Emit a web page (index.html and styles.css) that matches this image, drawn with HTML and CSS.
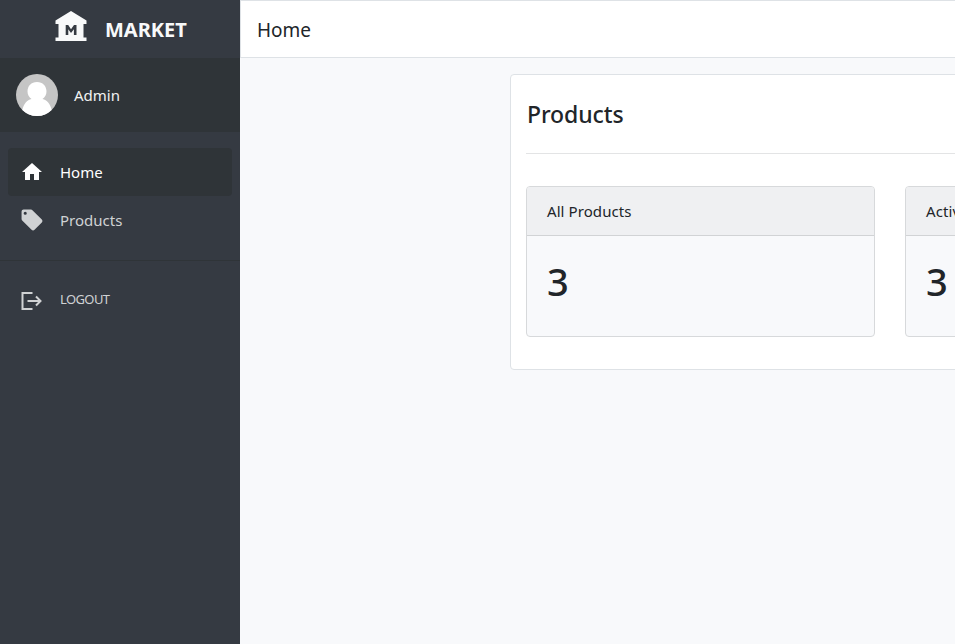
FILE: index.html
```html
<!DOCTYPE html>
<html lang="en">
<head>
<meta charset="utf-8">
<title>Market</title>
<link rel="stylesheet" href="styles.css">
</head>
<body>
<aside class="sidebar">
  <div class="brand">
    <svg class="brand-icon" viewBox="0 0 32 30"><path fill-rule="evenodd" d="M16 0L31.500 9.500V13H28.500V26.500H31.500V30H.5V26.500H3.500V13H.5V9.500zM10.700 14V24H13.300V18.300L16 22 18.900 18.300V24H21.500V14H19L16 18.200 13.200 14z"/></svg>
    <span class="brand-name">MARKET</span>
  </div>
  <div class="user">
    <svg class="avatar" viewBox="0 0 42 42"><circle cx="21" cy="21" r="21" fill="#c5c5c5"/><path d="M21 8c5.800 0 9.500 4.100 9.500 9.300 0 3.400-1.500 6.200-4 7.700 4.500 1.200 7.700 4.800 9.200 11A21 21 0 0 1 6.300 36c1.500-6.200 4.700-9.800 9.200-11-2.500-1.500-4-4.300-4-7.700C11.500 12.100 15.200 8 21 8z" fill="#fff"/></svg>
    <span class="user-name">Admin</span>
  </div>
  <nav class="menu">
    <a class="item active"><svg class="icon" viewBox="0 0 24 24"><path d="M10 20v-6h4v6h5v-8h3L12 3 2 12h3v8z"/></svg><span>Home</span></a>
    <a class="item"><svg class="icon" viewBox="0.500 0.500 23 23"><path fill-rule="evenodd" d="M21.410 11.580l-9-9C12.050 2.220 11.550 2 11 2H4c-1.100 0-2 .9-2 2v7c0 .55.220 1.050.590 1.420l9 9c.36.36.86.58 1.410.58s1.050-.22 1.410-.59l7-7c.37-.36.590-.86.590-1.410s-.23-1.060-.590-1.420zM5.500 7a1.500 1.500 0 1 1 0-3 1.500 1.500 0 0 1 0 3z"/></svg><span>Products</span></a>
  </nav>
  <div class="session">
    <a class="item logout"><svg class="icon" viewBox="0 0 24 24"><path class="stroke" d="M12.500 4H2.500v16h10M7.500 12h13M16 7.500l4.500 4.500-4.500 4.500"/></svg><span class="label-logout">LOGOUT</span></a>
  </div>
</aside>
<div class="page">
  <header class="topbar"><span>Home</span></header>
  <main class="content">
    <section class="panel">
      <h2>Products</h2>
      <div class="cards">
        <article class="card"><div class="card-head">All Products</div><div class="card-value">3</div></article>
        <article class="card"><div class="card-head">Active Products</div><div class="card-value">3</div></article>
      </div>
    </section>
  </main>
</div>
</body>
</html>
```
FILE: styles.css
```css
* { box-sizing: border-box; }
body {
  margin: 0;
  height: 644px;
  display: flex;
  overflow: hidden;
  background: #f8f9fb;
  color: #212529;
  font-family: "Noto Sans", "Open Sans", sans-serif;
  font-size: 15px;
}
.sidebar { width: 240px; flex: none; background: #353a42; color: #fff; }
.brand { height: 58px; display: flex; padding: 11px 0 0 55px; }
.brand-icon { width: 32px; height: 30px; fill: #f8f9fa; }
.brand-name { margin-left: 18px; line-height: 37px; font-size: 20px; font-weight: 700; color: #f8f9fa; }
.user { height: 74px; display: flex; align-items: center; padding-left: 16px; background: #2f3438; }
.avatar { width: 42px; height: 42px; margin-right: 16px; }
.user-name { color: #f1f2f2; }
.menu { height: 129px; padding: 16px 8px 0; border-bottom: 1px solid #2f3438; }
.item { height: 48px; display: flex; align-items: center; padding-left: 12px; border-radius: 4px; color: #d0d2d4; }
.item.active { background: #2f3438; color: #fff; }
.icon { width: 24px; height: 24px; margin-right: 16px; fill: currentColor; }
.stroke { fill: none; stroke: currentColor; stroke-width: 2; }
.session { padding: 15px 8px; }
.logout { font-size: 13px; letter-spacing: -0.6px; }
.logout .icon { position: relative; top: 1px; }
.label-logout { padding-bottom: 2px; }
.page { flex: 1; min-width: 0; overflow: hidden; }
.topbar { height: 58px; padding-left: 16px; border: 1px solid #dee2e6; border-right: 0; background: #fff; font-size: 19px; line-height: 58px; }
.content { padding: 16px 0 0 270px; }
.panel { width: 1000px; height: 296px; padding: 0 15px; background: #fff; border: 1px solid #dee2e6; border-radius: 4px; }
h2 { height: 79px; margin: 0 0 32px; padding-left: 1px; line-height: 78px; font-size: 23px; font-weight: 500; letter-spacing: -0.1px; border-bottom: 1px solid #e3e4e5; }
.cards { display: flex; gap: 30px; }
.card { width: 349px; height: 151px; flex: none; border: 1px solid #d7d9db; border-radius: 4px; background: #f8f9fb; overflow: hidden; }
.card-head { height: 49px; padding-left: 20px; line-height: 49px; letter-spacing: 0.08px; background: #eff0f2; border-bottom: 1px solid #d1d3d5; }
.card-value { padding-left: 20px; font-size: 38px; font-weight: 500; line-height: 90px; }
```
